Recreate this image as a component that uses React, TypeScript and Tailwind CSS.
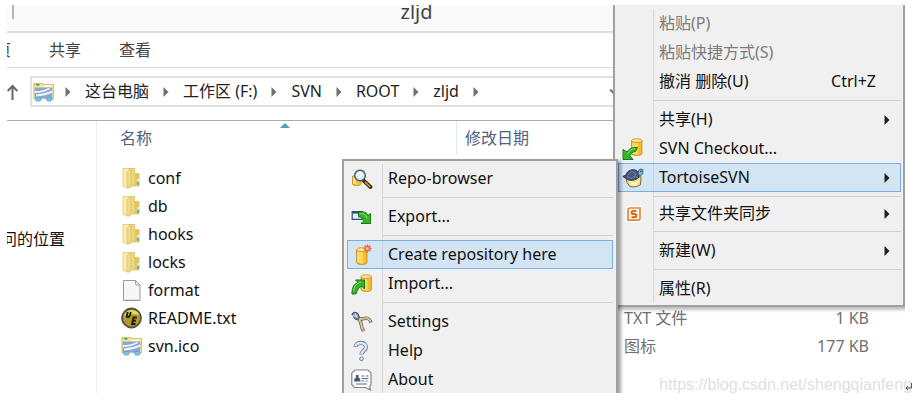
import type { ReactNode } from "react";

type MenuEntry =
  | { kind: "item"; label: string; icon?: ReactNode; shortcut?: string; submenu?: boolean; active?: boolean; disabled?: boolean; compact?: boolean }
  | { kind: "separator" };

type FileRow = { name: string; icon: ReactNode; type?: string; size?: string };

function FolderIcon() {
  return (
    <svg width="20" height="22" viewBox="0 0 20 22" aria-hidden="true">
      <path d="M7 1.500h6.500v5H18v12.500H7z" fill="#ecd683" stroke="#d8bd5c" strokeWidth=".8" />
      <path d="M13.500 6.500H18V19h-4.500z" fill="#e3c65c" />
      <path d="M2 1.500h5.500l1.500 1.500v18.200L2 19.500z" fill="#faedad" stroke="#dfc76f" strokeWidth=".8" />
      <path d="M6 4.500l4-2v17l-4 1.700z" fill="#efdb8a" stroke="#dcc164" strokeWidth=".7" />
      <path d="M17 14.500v3.500" stroke="#3d9fd6" strokeWidth="1.500" />
      <path d="M17 12v2.500" stroke="#fff" strokeWidth="1.500" />
    </svg>
  );
}

function FileIcon() {
  return (
    <svg width="20" height="22" viewBox="0 0 20 22" aria-hidden="true">
      <path d="M2.500 1.500h12l4.500 4.500v15.500H2.500z" fill="#f7f7f7" stroke="#999" />
      <path d="M3.500 20.500h14.500" stroke="#dedede" />
      <path d="M14.500 1.500l.3 4.300L19 6z" fill="#fff" stroke="#999" />
    </svg>
  );
}

function UltraEditIcon() {
  return (
    <svg width="22" height="22" viewBox="0 0 22 22" aria-hidden="true">
      <circle cx="10.500" cy="11" r="9.500" fill="#b39a22" stroke="#505050" strokeWidth="1.800" />
      <path d="M3 9c2-7.500 12.500-8 15.500-1-5-1.500-10-1-15.500 1z" fill="#e4d262" />
      <path d="M6.800 5L5.800 8.500c-.4 2.300 2.400 2.300 3 0L9.900 5" fill="none" stroke="#1c1a10" strokeWidth="1.900" />
      <path d="M15.800 10.500h-3.300L11 17h3.500M11.800 13.800h3" fill="none" stroke="#1c1a10" strokeWidth="1.900" />
    </svg>
  );
}

function DriveIcon() {
  return (
    <svg width="22" height="22" viewBox="0 0 22 22" aria-hidden="true">
      <path d="M1 2.500h8.500l1 1H20.500V17.500H1z" fill="#f7e9a5" stroke="#dcc067" strokeWidth="1.200" />
      <path d="M3 3.800h3.500" stroke="#32b428" strokeWidth="1.600" />
      <path d="M11 5h8" stroke="#fffbe6" strokeWidth="1.400" />
      <path d="M1.800 6.500h17.400V17H1.800z" fill="#8aa5d6" />
      <path d="M2 11c5.500 0 10-1 14.500-3.500M3 14.500c6-.5 11-1.500 16-4" stroke="#eef3fb" strokeWidth="2" fill="none" />
      <path d="M2 18c1-2 5-2 6.500 0L7 20H3.500zM13 18c1-2 5-2 6.500 0L18 20h-3.500z" fill="#79c8ec" stroke="#4ba3cf" strokeWidth=".8" />
    </svg>
  );
}

function Barrel({ x, y }: { x: number; y: number }) {
  return (
    <g transform={`translate(${x} ${y})`}>
      <path d="M.6 2.500v13c0 2.600 10.300 2.600 10.300 0v-13z" fill="#f4bd2c" stroke="#c48a1c" strokeWidth=".9" />
      <path d="M2.500 5v10.500" stroke="#fde58a" strokeWidth="2" />
      <path d="M5.500 5v11.500" stroke="#fbd75f" strokeWidth="3" />
      <ellipse cx="5.750" cy="2.700" rx="5.100" ry="2" fill="#ffe68a" stroke="#cf9628" strokeWidth=".9" />
    </g>
  );
}

function CheckoutIcon() {
  return (
    <svg width="22" height="22" viewBox="0 0 22 22" aria-hidden="true">
      <Barrel x={9} y={0} />
      <path d="M15.500 9.500C10 9 7 11 5 14L1 11.500v10h10L8 17.800c1-2.500 3-4.300 5.500-4.300z" fill="#35b52a" stroke="#147a12" />
      <path d="M13 10.700c-3.500 0-5.500 2-7.500 5" stroke="#8be573" fill="none" />
    </svg>
  );
}

function ImportIcon() {
  return (
    <svg width="22" height="22" viewBox="0 0 22 22" aria-hidden="true">
      <Barrel x={9.500} y={1} />
      <path d="M1 21c0-7 1.800-9.800 6-11.500L4.500 7h9v9l-2.800-3C7.500 14.500 6 17 5 21z" fill="#35b52a" stroke="#147a12" />
      <path d="M2.500 18c.5-5 3-7.500 7.500-9" stroke="#8be573" fill="none" />
    </svg>
  );
}

function TortoiseIcon() {
  return (
    <svg width="22" height="22" viewBox="0 0 22 22" aria-hidden="true">
      <path d="M4 11l1 4.500 3 4.300h6l4.500-2 .5-8z" fill="#ecd982" stroke="#7c7237" />
      <path d="M7 14.500c3 2 7 2 10-.500M9 17.500h6" stroke="#fff7c2" strokeWidth="1.800" fill="none" />
      <path d="M.8 9.500L4 8c1-4 5-5.800 9-5 3 .8 4.500 3.500 4 7-3 3.500-10 4.500-13 1.500z" fill="#4a5482" stroke="#2b3357" />
      <path d="M6 8l4-3.500 4 2.500-2 3.500M5 9.500l4 2 3-2 4 1" stroke="#7783a8" fill="none" strokeWidth=".9" />
      <path d="M16.500 7.500V4L18 2l2.800.5v4l-2.300 2.500z" fill="#77b6cf" stroke="#3c7186" />
      <circle cx="19" cy="4.200" r=".8" fill="#234" />
    </svg>
  );
}

function SyncFolderIcon() {
  return (
    <svg width="22" height="22" viewBox="0 0 22 22" aria-hidden="true">
      <path d="M4 3h16v16H4z" fill="#fff" />
      <path d="M18 5v10.500c0 1-.5 1.700-1.500 1.700H6V6.700C6 5.600 6.500 5 7.500 5z" fill="#fff6ed" stroke="#e5853a" strokeWidth="1.700" />
      <path d="M14.300 8h-3c-2.200 0-2.200 3 0 3h1.400c2.200 0 2.200 3.200 0 3.200H9.500" fill="none" stroke="#dc6415" strokeWidth="2" />
    </svg>
  );
}

function RepoBrowserIcon() {
  return (
    <svg width="22" height="22" viewBox="0 0 22 22" aria-hidden="true">
      <path d="M1.500 8v8c0 2 8.500 2 8.500 0V8z" fill="#f3c13c" stroke="#cf9a2c" />
      <path d="M3.500 9v7" stroke="#ffe99b" strokeWidth="2" />
      <path d="M12.500 12.500l7 6.500" stroke="#3a2f19" strokeWidth="3.800" strokeLinecap="round" />
      <path d="M14 14l5.300 4.800" stroke="#c88a2b" strokeWidth="1.800" />
      <circle cx="9" cy="7.500" r="5.300" fill="#d6ebf8" stroke="#4c565f" strokeWidth="1.400" />
      <path d="M6 8c0-3 2.500-4 5-3M7.500 10l4-4" stroke="#fff" strokeWidth="1.500" fill="none" />
    </svg>
  );
}

function ExportIcon() {
  return (
    <svg width="22" height="22" viewBox="0 0 22 22" aria-hidden="true">
      <path d="M1.200 5.700h10v7.600h-10z" fill="#e3eefb" stroke="#34517e" strokeWidth="1.200" />
      <path d="M1.200 6.500h10" stroke="#34517e" strokeWidth="2.200" />
      <path d="M7.500 6.500c5-1.500 8.500 0 9.500 3l2.500-2v10H10l3-2.800c-.5-2.500-2-3.700-5.500-3.700z" fill="#35b52a" stroke="#147a12" />
      <path d="M8.500 7.800c4-.7 6.500.7 7.500 4.500" stroke="#8be573" fill="none" />
    </svg>
  );
}

function CreateIcon() {
  return (
    <svg width="22" height="22" viewBox="0 0 22 22" aria-hidden="true">
      <Barrel x={5} y={3} />
      <path d="M16.500 .5v8M12.500 4.500h8M13.700 1.700l5.600 5.600M19.300 1.700l-5.600 5.600" stroke="#fb5a2b" strokeWidth="1.400" />
      <circle cx="16.500" cy="4.500" r="1.900" fill="#ffdca8" stroke="#f24c21" />
    </svg>
  );
}

function SettingsIcon() {
  return (
    <svg width="22" height="22" viewBox="0 0 22 22" aria-hidden="true">
      <path d="M7.500 8c3.500 3 2.500 6 3.500 9l1.500 3M8 8c4 .5 6-1.500 9-.500 1.800.7 2.300 2 3 4" fill="none" stroke="#6d604a" strokeWidth="3.400" />
      <path d="M7.500 8c3.500 3 2.500 6 3.500 9l1.200 2.400M8 8c4 .5 6-1.500 9-.500 1.700.7 2.200 1.800 2.700 3.200" fill="none" stroke="#d9c49b" strokeWidth="1.900" />
      <path d="M.8 3L3 1.200l3.500.8L8.500 6 7 8.800l-3-.8z" fill="#7e88a2" stroke="#414960" />
      <path d="M1.500 4.500l4 1M4 2.500l2.300 4" stroke="#e3e9f4" strokeWidth="1.200" />
    </svg>
  );
}

function HelpIcon() {
  return (
    <svg width="22" height="22" viewBox="0 0 22 22" aria-hidden="true">
      <path d="M4.500 7c0-5.500 10.500-5.500 10.500 0 0 3.800-4.500 4-4.500 7.500" fill="none" stroke="#7488a0" strokeWidth="4.300" />
      <path d="M4.500 6.400c0-4.600 10.500-4.600 10.500.6 0 3.800-4.500 4-4.500 7" fill="none" stroke="#dde8f1" strokeWidth="2.300" />
      <circle cx="10.500" cy="18.800" r="1.900" fill="#d3e0eb" stroke="#7488a0" />
    </svg>
  );
}

function AboutIcon() {
  return (
    <svg width="22" height="22" viewBox="0 0 22 22" aria-hidden="true">
      <path d="M4 1h13l3 3v11.500L18.500 18l1 3-5-2.500H3.500L.8 15.500V4z" fill="#fff" stroke="#858585" strokeWidth="1.200" />
      <path d="M3 12.500l.5-3L5 8.700V6h2.500v2.700l1.500.8.5 3z" fill="#4a5678" />
      <path d="M10.500 7h3M15 7h2.500M10.500 9.500h7M10.500 12h2.500M14.500 12h2M5 15h11" stroke="#5c688a" strokeWidth="1.200" />
    </svg>
  );
}

function Triangle({ className }: { className: string }) {
  return (
    <svg width="6" height="10" viewBox="0 0 6 10" className={`shrink-0 ${className}`} aria-hidden="true">
      <path d="M.5 0L5.500 5L.5 10z" fill="currentColor" />
    </svg>
  );
}

function Menu({ label, entries }: { label: string; entries: MenuEntry[] }) {
  return (
    <div role="menu" aria-label={label} className="relative">
      <div className="absolute inset-y-0 left-[35px] w-px bg-[#d8d8d8]" />
      {entries.map((entry, i) =>
        entry.kind === "separator" ? (
          <div key={i} role="separator" className="ml-[35px] flex h-[9px] items-center">
            <div className="h-px w-full bg-[#d0d0d0]" />
          </div>
        ) : (
          <button
            key={i}
            type="button"
            role="menuitem"
            disabled={entry.disabled}
            className={`relative flex w-full items-center border pr-[10px] text-left ${entry.compact ? "h-[26px]" : "h-[29px]"} ${
              entry.active ? "border-[#78aee5] bg-[#a8d2f6]/40" : "border-transparent"
            } ${entry.disabled ? "text-[#7b7b7b]" : "text-[#111]"}`}
          >
            <span className="flex w-10 shrink-0 pl-[3px]">{entry.icon}</span>
            <span className="flex-1 pb-[2px] whitespace-nowrap">{entry.label}</span>
            {entry.shortcut && <span className="pr-[14px] pb-[2px]">{entry.shortcut}</span>}
            {entry.submenu && <Triangle className="text-[#222]" />}
          </button>
        ),
      )}
    </div>
  );
}

const separator: MenuEntry = { kind: "separator" };

const contextEntries: MenuEntry[] = [
  { kind: "item", label: "粘贴(P)", disabled: true },
  { kind: "item", label: "粘贴快捷方式(S)", disabled: true },
  { kind: "item", label: "撤消 删除(U)", shortcut: "Ctrl+Z" },
  separator,
  { kind: "item", label: "共享(H)", submenu: true },
  { kind: "item", label: "SVN Checkout...", icon: <CheckoutIcon /> },
  { kind: "item", label: "TortoiseSVN", icon: <TortoiseIcon />, submenu: true, active: true },
  separator,
  { kind: "item", label: "共享文件夹同步", icon: <SyncFolderIcon />, submenu: true, compact: true },
  separator,
  { kind: "item", label: "新建(W)", submenu: true },
  separator,
  { kind: "item", label: "属性(R)" },
];

const svnEntries: MenuEntry[] = [
  { kind: "item", label: "Repo-browser", icon: <RepoBrowserIcon /> },
  separator,
  { kind: "item", label: "Export...", icon: <ExportIcon /> },
  separator,
  { kind: "item", label: "Create repository here", icon: <CreateIcon />, active: true },
  { kind: "item", label: "Import...", icon: <ImportIcon /> },
  separator,
  { kind: "item", label: "Settings", icon: <SettingsIcon /> },
  { kind: "item", label: "Help", icon: <HelpIcon /> },
  { kind: "item", label: "About", icon: <AboutIcon /> },
];

const files: FileRow[] = [
  { name: "conf", icon: <FolderIcon /> },
  { name: "db", icon: <FolderIcon /> },
  { name: "hooks", icon: <FolderIcon /> },
  { name: "locks", icon: <FolderIcon /> },
  { name: "format", icon: <FileIcon /> },
  { name: "README.txt", icon: <UltraEditIcon />, type: "TXT 文件", size: "1 KB" },
  { name: "svn.ico", icon: <DriveIcon />, type: "图标", size: "177 KB" },
];

const crumbs = ["这台电脑", "工作区 (F:)", "SVN", "ROOT", "zljd"];

export default function App() {
  return (
    <div className="relative bg-white pt-[5px] pr-[14px] pb-[10px] pl-[7px] font-['Noto_Sans','Noto_Sans_CJK_SC',sans-serif] text-base leading-6 text-[#111]">
      <div className="relative overflow-hidden bg-white">
        <header className="relative flex h-7 items-start justify-center border-b-2 border-[#dcdfe0] bg-[#fafafa] pr-[79px]">
          <div className="absolute top-0 left-[5px] h-[14px] w-[2px] bg-[#b5b5b5]" />
          <h1 className="-mt-[3px] text-xl leading-5 text-[#444]">zljd</h1>
        </header>

        <nav className="flex h-[35px] items-center border-b border-[#d5dadd] text-[#444]">
          <button type="button" className="-ml-3 w-4">页</button>
          <button type="button" className="ml-[38px]">共享</button>
          <button type="button" className="ml-[38px]">查看</button>
        </nav>

        <div className="flex items-center border-b border-[#a9adb0] pt-2 pb-[13px]">
          <button type="button" aria-label="Up" className="flex w-[23px] shrink-0 text-[#666]">
            <svg width="11" height="16" viewBox="0 0 11 16" aria-hidden="true">
              <path d="M5.500 16V2M.7 7L5.500 2l4.800 5" fill="none" stroke="currentColor" strokeWidth="2" />
            </svg>
          </button>
          <div className="flex h-[31px] flex-1 items-center gap-[14px] border-2 border-[#dfe2e3] pl-px">
            <DriveIcon />
            <Triangle className="-ml-1 text-[#707070]" />
            {crumbs.map((crumb) => (
              <span key={crumb} className="flex items-center gap-[14px]">
                <button type="button" className="pb-px whitespace-nowrap text-[#222]">{crumb}</button>
                <Triangle className="text-[#707070]" />
              </span>
            ))}
            <button type="button" aria-label="History" className="mr-[284px] ml-auto text-[#777]">
              <svg width="10" height="8" viewBox="0 0 10 8" aria-hidden="true">
                <path d="M1 1.500l4 4 4-4" fill="none" stroke="currentColor" strokeWidth="2" />
              </svg>
            </button>
          </div>
        </div>

        <div className="flex">
          <aside className="flex w-[90px] shrink-0 items-center overflow-hidden border-r border-[#ececec] pb-9">
            <span className="-ml-[6px] whitespace-nowrap">问的位置</span>
          </aside>
          <main className="relative flex-1 pb-[33px]">
            <svg width="10" height="5" viewBox="0 0 10 5" className="absolute top-[2px] left-[183px]" aria-hidden="true">
              <path d="M0 5L5 0l5 5z" fill="#4f9fbf" />
            </svg>
            <table className="w-full table-fixed border-collapse">
              <thead>
                <tr className="h-[43px] text-left text-[#50617f]">
                  <th className="w-[360px] p-0 align-top font-normal">
                    <div className="flex h-[34px] items-center border-r border-[#dbeaf6] pl-[23px]">名称</div>
                  </th>
                  <th className="w-[159px] p-0 align-top font-normal">
                    <div className="flex h-[34px] items-center pl-2">修改日期</div>
                  </th>
                  <th aria-label="类型" className="w-[130px] p-0" />
                  <th aria-label="大小" className="p-0" />
                </tr>
              </thead>
              <tbody>
                {files.map((file) => (
                  <tr key={file.name} className="h-7 text-[#707070]">
                    <td className="p-0 text-[#111]">
                      <div className="flex items-center pl-6">
                        <span className="flex w-[27px] shrink-0">{file.icon}</span>
                        {file.name}
                      </div>
                    </td>
                    <td className="p-0" />
                    <td className="p-0 pl-2">{file.type}</td>
                    <td className="p-0 pr-9 text-right">{file.size}</td>
                  </tr>
                ))}
              </tbody>
            </table>
          </main>
        </div>

        <div className="absolute top-0 right-0 w-[292px] border-r-2 border-b-2 border-l-2 border-[#a0a0a0] bg-[#f0f0f0] pt-1 pr-[2px] pb-[2px] pl-[3px] shadow-[2px_3px_3px_rgba(0,0,0,0.25)]">
          <Menu label="Context menu" entries={contextEntries} />
        </div>
        <div className="absolute top-[154px] right-[287px] w-[276px] border-2 border-[#a0a0a0] bg-[#f0f0f0] px-[3px] pt-[3px] pb-1 shadow-[3px_2px_3px_rgba(0,0,0,0.35)]">
          <Menu label="TortoiseSVN" entries={svnEntries} />
        </div>
      </div>
      <span className="absolute right-[7px] bottom-2 font-['Liberation_Sans',sans-serif] leading-5 whitespace-nowrap text-[#e0e0e0]">
        https://blog.csdn.net/shengqianfeng
      </span>
      <svg width="7" height="8" viewBox="0 0 7 8" className="absolute right-[7px] bottom-3" aria-hidden="true">
        <path d="M6.500 0v5H1M3 3L1 5l2 2" fill="none" stroke="#555" />
      </svg>
    </div>
  );
}
